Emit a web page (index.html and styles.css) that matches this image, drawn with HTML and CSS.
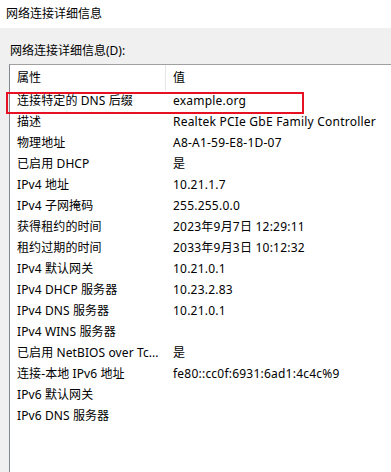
FILE: index.html
```html
<!DOCTYPE html>
<html lang="zh-CN">
<head>
<meta charset="utf-8">
<link rel="stylesheet" href="styles.css">
</head>
<body>
<div class="title">网络连接详细信息</div>
<div class="panel">
  <div class="label">网络连接详细信息(D):</div>
  <div class="listbox">
    <div class="header">
      <div class="hcell name">属性</div>
      <div class="hcell value">值</div>
    </div>
    <div class="rows">
      <div class="row highlighted"><div class="name">连接特定的 DNS 后缀</div><div class="value">example.org</div></div>
      <div class="row"><div class="name">描述</div><div class="value">Realtek PCIe GbE Family Controller</div></div>
      <div class="row"><div class="name">物理地址</div><div class="value">A8-A1-59-E8-1D-07</div></div>
      <div class="row"><div class="name">已启用 DHCP</div><div class="value">是</div></div>
      <div class="row"><div class="name">IPv4 地址</div><div class="value">10.21.1.7</div></div>
      <div class="row"><div class="name">IPv4 子网掩码</div><div class="value">255.255.0.0</div></div>
      <div class="row"><div class="name">获得租约的时间</div><div class="value">2023年9月7日 12:29:11</div></div>
      <div class="row"><div class="name">租约过期的时间</div><div class="value">2033年9月3日 10:12:32</div></div>
      <div class="row"><div class="name">IPv4 默认网关</div><div class="value">10.21.0.1</div></div>
      <div class="row"><div class="name">IPv4 DHCP 服务器</div><div class="value">10.23.2.83</div></div>
      <div class="row"><div class="name">IPv4 DNS 服务器</div><div class="value">10.21.0.1</div></div>
      <div class="row"><div class="name">IPv4 WINS 服务器</div><div class="value"></div></div>
      <div class="row"><div class="name">已启用 NetBIOS over Tc...</div><div class="value">是</div></div>
      <div class="row"><div class="name">连接-本地 IPv6 地址</div><div class="value">fe80::cc0f:6931:6ad1:4c4c%9</div></div>
      <div class="row"><div class="name">IPv6 默认网关</div><div class="value"></div></div>
      <div class="row"><div class="name">IPv6 DNS 服务器</div><div class="value"></div></div>
    </div>
    <div class="redbox"></div>
  </div>
</div>
</body>
</html>
```
FILE: styles.css
```css
html, body {
  margin: 0;
  padding: 0;
  background: #ffffff;
  font-family: "Noto Sans", "Noto Sans CJK SC", sans-serif;
  font-size: 12px;
  color: #000000;
  width: 391px;
  height: 472px;
  overflow: hidden;
}
.title {
  height: 28px;
  line-height: 28px;
  padding-left: 6px;
}
.panel {
  background: #f0f0f0;
  height: 444px;
  display: flex;
  flex-direction: column;
}
.label {
  height: 36px;
  line-height: 21px;
  padding-left: 10px;
  padding-top: 12px;
  box-sizing: border-box;
}
.listbox {
  position: relative;
  margin-left: 9px;
  flex: 1;
  background: #ffffff;
  border-top: 1px solid #a0a0a0;
  border-left: 1px solid #828790;
}
.header {
  display: grid;
  grid-template-columns: 156px 1fr;
  height: 25px;
  align-items: center;
}
.hcell {
  height: 25px;
  line-height: 25px;
}
.hcell.name {
  border-right: 1px solid #e5e5e5;
}
.row {
  display: grid;
  grid-template-columns: 156px 1fr;
  height: 21px;
  line-height: 21px;
}
.name {
  padding-left: 7px;
  white-space: nowrap;
  overflow: hidden;
  letter-spacing: 0.1px;
}
.value {
  padding-left: 7px;
  white-space: nowrap;
  letter-spacing: 0.22px;
}
.redbox {
  position: absolute;
  left: -4px;
  top: 27px;
  width: 294px;
  height: 18px;
  border: 2px solid #e81123;
}
```
